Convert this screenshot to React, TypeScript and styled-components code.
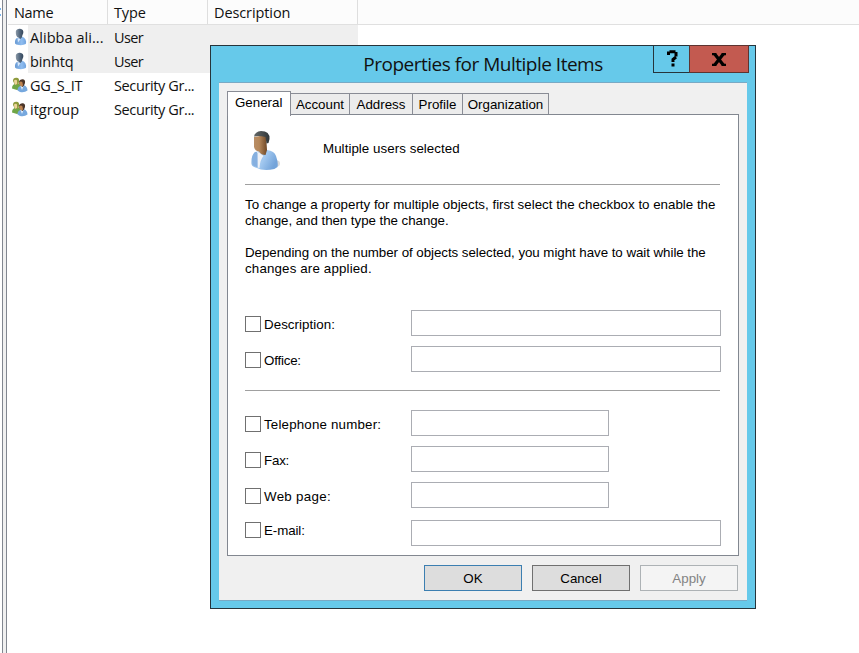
import React from "react";
import styled, { createGlobalStyle } from "styled-components";

const GlobalStyle = createGlobalStyle`
  * { box-sizing: border-box; }
  html, body { margin: 0; background: #fff; overflow: hidden; }
`;

const Screen = styled.div`
  position: relative;
  display: flex;
  width: 859px;
  height: 653px;
  overflow: hidden;
  background: #fff;
  color: #111;
  font-family: "Open Sans", "Noto Sans", sans-serif;
  font-size: 14.5px;
`;

const TreeEdge = styled.div`
  width: 3px;
  flex: none;
  border-right: 1px solid #828790;
  background: #fff;
  padding-top: 8px;
`;

const TreeMark = styled.div`
  width: 1px;
  height: 2px;
  background: #79b4ee;
  margin-bottom: 4px;
`;

const Splitter = styled.div`
  width: 4px;
  flex: none;
  background: #f0f0f0;
  border-right: 1px solid #828790;
`;

const ListPane = styled.div`
  flex: 1;
  padding-left: 1px;
`;

const HeaderRow = styled.div`
  display: flex;
  height: 25px;
  background: #fcfcfc;
  border-bottom: 1px solid #e0e0e0;
`;

const HeaderCell = styled.div<{ $w: number }>`
  width: ${(p) => p.$w}px;
  border-right: 1px solid #dedede;
  padding-left: 6px;
  line-height: 25px;
`;

const Row = styled.div`
  display: flex;
  height: 24px;
  line-height: 26px;
`;

const IconCell = styled.div`
  width: 20px;
  display: flex;
  justify-content: flex-end;
  padding-top: 3px;
`;

const RowBody = styled.div<{ $selected?: boolean }>`
  display: flex;
  width: 330px;
  background: ${(p) => (p.$selected ? "#efefef" : "transparent")};
`;

const NameCell = styled.div`
  width: 86px;
  padding-left: 2px;
  white-space: nowrap;
`;

const TypeCell = styled.div`
  white-space: nowrap;
`;

const Spaced = styled.span<{ $ls?: number }>`
  letter-spacing: ${(p) => p.$ls ?? 0}px;
  white-space: pre;
`;

const Dialog = styled.div`
  position: absolute;
  left: 210px;
  top: 45px;
  width: 546px;
  height: 564px;
  border: 1px solid #26343b;
  background: #66c9ea;
  padding: 0 8px;
`;

const TitleBar = styled.div`
  position: relative;
  height: 36px;
  text-align: center;
  font-size: 19px;
  line-height: 37px;
`;

const CaptionButtons = styled.div`
  position: absolute;
  right: -2px;
  top: -1px;
  display: flex;
`;

const CaptionButton = styled.div<{ $w: number; $bg: string; $edge: string }>`
  width: ${(p) => p.$w}px;
  height: 28px;
  border: 1px solid ${(p) => p.$edge};
  background: ${(p) => p.$bg};
  display: flex;
  align-items: center;
  justify-content: center;
  & + & { margin-left: -1px; }
`;

const Client = styled.div`
  height: 519px;
  background: #f0f0f0;
  border-top: 1px solid #79a9c4;
  border-bottom: 1px solid #79a9c4;
  padding: 8px 8px 0;
  font-family: "Liberation Sans", Arial, sans-serif;
  font-size: 13.33px;
  color: #000;
`;

const Tabs = styled.div`
  display: flex;
  align-items: flex-end;
  height: 23px;
`;

const ActiveTab = styled.div`
  position: relative;
  z-index: 1;
  width: 64px;
  height: 25px;
  margin-bottom: -2px;
  border: 1px solid #898c95;
  border-bottom: none;
  background: #fff;
  padding-left: 7px;
  line-height: 22px;
`;

const Tab = styled.div<{ $w: number }>`
  width: ${(p) => p.$w}px;
  height: 21px;
  border-top: 1px solid #898c95;
  border-right: 1px solid #898c95;
  background: #ececec;
  text-align: center;
  line-height: 21px;
`;

const Panel = styled.div`
  height: 442px;
  border: 1px solid #828790;
  background: #fff;
  padding: 15px 17px 0;
`;

const Intro = styled.div`
  display: flex;
  height: 54px;
  padding-left: 4px;
`;

const IntroText = styled.div`
  margin-left: 42px;
  padding-top: 11px;
  line-height: 16px;
`;

const Rule = styled.div`
  height: 1px;
  width: 475px;
  background: #a0a0a0;
`;

const Help = styled.div`
  height: 125px;
  padding-top: 12px;
  line-height: 16px;
`;

const HelpLine = styled.div`
  height: 16px;
`;

const Field = styled.div<{ $gap: number }>`
  display: flex;
  height: 26px;
  margin-bottom: ${(p) => p.$gap}px;
`;

const FieldLabel = styled.label<{ $top: number }>`
  display: flex;
  width: 166px;
  height: 16px;
  margin-top: ${(p) => p.$top}px;
  line-height: 17px;
  gap: 3px;
`;

const Check = styled.span`
  width: 16px;
  height: 16px;
  flex: none;
  border: 1px solid #707070;
  background: #fff;
`;

const Input = styled.input<{ $w: number }>`
  width: ${(p) => p.$w}px;
  height: 26px;
  margin: 0;
  border: 1px solid #abadb3;
  background: #fff;
  outline: none;
`;

const ContactBlock = styled.div`
  padding-top: 19px;
`;

const Footer = styled.div`
  display: flex;
  justify-content: flex-end;
  gap: 10px;
  padding: 9px 1px 0 0;
`;

const Button = styled.button<{ $kind: "primary" | "normal" | "off" }>`
  width: 98px;
  height: 26px;
  padding: 2px 0 0;
  font: inherit;
  line-height: 22px;
  border: 1px solid ${(p) => ({ primary: "#3c7fb1", normal: "#707070", off: "#adb2b5" })[p.$kind]};
  background: ${(p) => (p.$kind === "off" ? "#f4f4f4" : "#dddddd")};
  color: ${(p) => (p.$kind === "off" ? "#838383" : "#000")};
`;

const UserIcon = () => (
  <svg width="16" height="18" viewBox="0 0 16 18">
    <defs>
      <linearGradient id="uh" x1="0" x2="1">
        <stop offset="0" stopColor="#8c9aa8" />
        <stop offset="0.5" stopColor="#566a80" />
        <stop offset="1" stopColor="#33455a" />
      </linearGradient>
      <linearGradient id="ub" x1="0" x2="1">
        <stop offset="0" stopColor="#6a9bd4" />
        <stop offset="0.6" stopColor="#8fbdf0" />
        <stop offset="1" stopColor="#6fa2de" />
      </linearGradient>
    </defs>
    <path d="M3 15.500 Q2.600 11 5 10 L10 8.500 Q12.500 9.500 13.500 11.500 Q14.800 14.500 13.800 16 Q11 17.500 7 17 Q3.500 16.800 3 15.500 Z" fill="url(#ub)" />
    <path d="M5.500 10 L6 14.500 L8.500 11 Z" fill="#d9e8fa" />
    <path d="M3.800 3.500 Q4.500 0.600 8 0.800 Q11.800 1.300 11.300 5 L10.300 7.500 L9.800 9.500 L8.300 11 L6.500 9.500 Q3.600 9 3.800 3.500 Z" fill="url(#uh)" />
  </svg>
);

const GroupIcon = () => (
  <svg width="17" height="18" viewBox="0 0 17 18">
    <path d="M1 12.500 Q1 8.500 4 8 L8 7.500 Q10 9 10 13 L6 14 Z" fill="#6fa546" />
    <path d="M2 5 Q2 1.500 5.500 1.700 Q8.500 2 8.200 5.500 L7 9 L4 9 Z" fill="#8d9a3b" />
    <path d="M3 4.500 Q5 3.200 6 4.500 L6.200 7.500 L4.600 9 Q3 8 3 4.500Z" fill="#ecd39a" />
    <path d="M6.500 14.500 Q6.500 10.500 9.500 10 L13 9.300 Q16.500 10.500 16.500 14.500 Q13.500 17 9 16 Z" fill="#76a8de" />
    <path d="M9.500 10 L11 14 L12.500 10Z" fill="#e4f0fd" />
    <path d="M8 5.800 Q8.500 3 11.500 3.200 Q14.600 3.500 14 7 L13 9.500 L11.500 11 L9.500 9.500 Q7.800 8.500 8 5.800Z" fill="#4b3529" />
    <path d="M8.200 6 Q10 5 11.300 6 L12 9.300 L11 10.500 L9.300 9.500 Q8 8.500 8.200 6Z" fill="#c08552" />
  </svg>
);

const PortraitIcon = () => (
  <svg width="32" height="42" viewBox="0 0 32 42">
    <defs>
      <linearGradient id="skin" x1="0" x2="1">
        <stop offset="0" stopColor="#b98e66" />
        <stop offset="0.4" stopColor="#b5875a" />
        <stop offset="1" stopColor="#6f4826" />
      </linearGradient>
      <linearGradient id="coat" x1="0" x2="1" y1="0" y2="0.4">
        <stop offset="0" stopColor="#78a7da" />
        <stop offset="0.55" stopColor="#a3c9f0" />
        <stop offset="1" stopColor="#74a4da" />
      </linearGradient>
      <linearGradient id="hair" x1="0" x2="1">
        <stop offset="0" stopColor="#646868" />
        <stop offset="1" stopColor="#303638" />
      </linearGradient>
    </defs>
    <ellipse cx="28" cy="33.500" rx="3" ry="3" fill="#dcdcdc" />
    <path d="M2.500 34 Q2 25 6 22 L18 20 Q25.500 21 27 26 Q29.500 33 28.500 37 Q26 39.500 21 39.800 Q12 40.500 8 38 Q3 37 2.500 34Z" fill="url(#coat)" />
    <path d="M8 22 L10.500 22.500 L14.500 26 Q11 30 10.500 38 L8.500 37.500 Z" fill="#eef1f6" />
    <path d="M6 22 L3.500 28 L4 35 L8.500 37.500 Q8.500 30 8.500 23 Z" fill="#86b0e0" />
    <path d="M5 7 L17 5 L18 20 L16.500 25 Q12 25 10 21.500 Q6 21 5 17 Z" fill="url(#skin)" />
    <path d="M5 6.500 Q6 1.500 12 1 Q21 1 20.500 9 L19.500 13 L17.500 13.500 L16.500 7 Q10 5.500 5 6.500Z" fill="url(#hair)" />
  </svg>
);

const HelpGlyph = styled.svg.attrs({ width: 12, height: 17, viewBox: "0 0 12 17" })`
  fill: none;
  stroke: #000;
  stroke-width: 3px;
  margin: -2px 0 0 3px;
`;

const CloseGlyph = styled.svg.attrs({ width: 14, height: 13, viewBox: "0 0 13 12" })`
  fill: none;
  stroke: #000;
  stroke-width: 2px;
  margin-right: 1px;
`;

const rows = [
  { name: "Alibba ali...", ls: 0.05, type: "User", tls: -0.6, user: true },
  { name: "binhtq", ls: -0.15, type: "User", tls: -0.6, user: true },
  { name: "GG_S_IT", ls: -0.2, type: "Security Gr...", tls: -0.38, user: false },
  { name: "itgroup", ls: 0, type: "Security Gr...", tls: -0.38, user: false },
];

const tabs = [
  { label: "Account", w: 59 },
  { label: "Address", w: 63 },
  { label: "Profile", w: 50 },
  { label: "Organization", w: 86 },
];

const help = [
  { text: "To change a property for multiple objects, first select the checkbox to enable the", ls: 0 },
  { text: "change, and then type the change.", ls: -0.05 },
  { text: "", ls: 0 },
  { text: "Depending on the number of objects selected, you might have to wait while the", ls: -0.05 },
  { text: "changes are applied.", ls: 0.15 },
];

type FieldSpec = { label: string; ls: number; w: number; gap: number; top: number };

const generalFields: FieldSpec[] = [
  { label: "Description:", ls: 0.05, w: 310, gap: 10, top: 6 },
  { label: "Office:", ls: -0.2, w: 310, gap: 18, top: 6 },
];

const contactFields: FieldSpec[] = [
  { label: "Telephone number:", ls: 0.18, w: 198, gap: 10, top: 6 },
  { label: "Fax:", ls: -0.2, w: 198, gap: 10, top: 6 },
  { label: "Web page:", ls: 0.3, w: 198, gap: 12, top: 6 },
  { label: "E-mail:", ls: -0.1, w: 310, gap: 0, top: 2 },
];

const FieldRow = ({ f }: { f: FieldSpec }) => (
  <Field $gap={f.gap}>
    <FieldLabel $top={f.top}>
      <Check />
      <Spaced $ls={f.ls}>{f.label}</Spaced>
    </FieldLabel>
    <Input $w={f.w} aria-label={f.label} />
  </Field>
);

export default function App() {
  return (
    <Screen>
      <GlobalStyle />
      <TreeEdge>
        <TreeMark />
        <TreeMark />
      </TreeEdge>
      <Splitter />
      <ListPane>
        <HeaderRow>
          <HeaderCell $w={100}><Spaced $ls={-0.3}>Name</Spaced></HeaderCell>
          <HeaderCell $w={100}><Spaced $ls={-0.15}>Type</Spaced></HeaderCell>
          <HeaderCell $w={150}><Spaced $ls={-0.1}>Description</Spaced></HeaderCell>
        </HeaderRow>
        {rows.map((r) => (
          <Row key={r.name}>
            <IconCell>{r.user ? <UserIcon /> : <GroupIcon />}</IconCell>
            <RowBody $selected={r.user}>
              <NameCell><Spaced $ls={r.ls}>{r.name}</Spaced></NameCell>
              <TypeCell><Spaced $ls={r.tls}>{r.type}</Spaced></TypeCell>
            </RowBody>
          </Row>
        ))}
      </ListPane>

      <Dialog>
        <TitleBar>
          <Spaced $ls={-0.5}>Properties for Multiple Items</Spaced>
          <CaptionButtons>
            <CaptionButton $w={37} $bg="#66c9ea" $edge="#26343b">
              <HelpGlyph>
                <path d="M1.500 5 V3 H3 M2.500 1.800 H8.500 M9 2 V6.500 M9 7 L6 9.500 V12" />
                <path d="M4.500 15 H7.500" />
              </HelpGlyph>
            </CaptionButton>
            <CaptionButton $w={60} $bg="#c35a50" $edge="#5d3431">
              <CloseGlyph>
                <path d="M2.500 1 L10.500 11 M10.500 1 L2.500 11" strokeWidth="3" />
                <path d="M0 1 H4 M9 1 H13 M0 11 H4 M9 11 H13" />
              </CloseGlyph>
            </CaptionButton>
          </CaptionButtons>
        </TitleBar>
        <Client>
          <Tabs>
            <ActiveTab>General</ActiveTab>
            {tabs.map((t) => (
              <Tab key={t.label} $w={t.w}>{t.label}</Tab>
            ))}
          </Tabs>
          <Panel>
            <Intro>
              <PortraitIcon />
              <IntroText><Spaced $ls={0.05}>Multiple users selected</Spaced></IntroText>
            </Intro>
            <Rule />
            <Help>
              {help.map((l, i) => (
                <HelpLine key={i}><Spaced $ls={l.ls}>{l.text}</Spaced></HelpLine>
              ))}
            </Help>
            {generalFields.map((f) => <FieldRow key={f.label} f={f} />)}
            <Rule />
            <ContactBlock>
              {contactFields.map((f) => <FieldRow key={f.label} f={f} />)}
            </ContactBlock>
          </Panel>
          <Footer>
            <Button $kind="primary">OK</Button>
            <Button $kind="normal">Cancel</Button>
            <Button $kind="off" disabled>Apply</Button>
          </Footer>
        </Client>
      </Dialog>
    </Screen>
  );
}
